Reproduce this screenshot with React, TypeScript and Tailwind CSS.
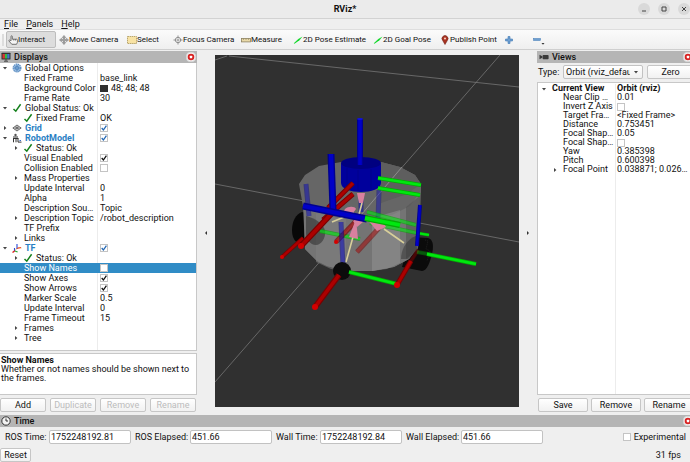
import { useState } from "react";
import type { ReactNode } from "react";
import clsx from "clsx";

type Row = {
  name: string;
  depth: number;
  arrow?: "open" | "closed";
  icon?: ReactNode;
  value?: string;
  checked?: boolean;
  display?: boolean;
  swatch?: boolean;
  bold?: boolean;
};

const TickIcon = () => (
  <svg viewBox="0 0 10 10" className="h-2.5 w-2.5 shrink-0" fill="none">
    <path d="M1.5 6l2.3 2.2L8.6 1.3" stroke="#14801c" strokeWidth="1.5" />
  </svg>
);

const GearIcon = () => (
  <svg viewBox="0 0 10 10" className="h-2.5 w-2.5 shrink-0" fill="none">
    <circle cx="5" cy="5" r="3.8" stroke="#4d83bd" strokeWidth="1.3" strokeDasharray="1.5 .5" />
    <circle cx="5" cy="5" r="3.2" fill="#8fb4db" />
    <circle cx="5" cy="5" r="1.8" stroke="#4d83bd" strokeWidth=".8" />
    <path d="M5 2v6M2 5h6" stroke="#4d83bd" strokeWidth=".6" />
  </svg>
);

const GridIcon = () => (
  <svg viewBox="0 0 10 10" className="h-2.5 w-2.5 shrink-0" fill="none" stroke="#666" strokeWidth=".9">
    <path d="M.8 5L5 2l4.2 3L5 8zM3 3.5l4.2 3M7 3.5l-4.2 3M1 5h8M5 2v6" />
  </svg>
);

const RobotIcon = () => (
  <svg viewBox="0 0 10 10" className="h-2.5 w-2.5 shrink-0" fill="none" stroke="#333">
    <circle cx="3.5" cy="2" r="1.2" fill="#555" stroke="none" />
    <path d="M1 4h5M2 5.5h4.5M1.5 5v4.3M4 5.5v3.8M6 5.5v3.6h3.5" />
    <path d="M7.5 7.5h1.5" stroke="#36c" />
  </svg>
);

const TfIcon = () => (
  <svg viewBox="0 0 10 10" className="h-2.5 w-2.5 shrink-0" fill="none">
    <path d="M1.5 8.5l2-1.6 2.5-2.4L9.5 5" stroke="#e8b64c" strokeWidth=".8" />
    <path d="M5 6V1M2.5 8V5" stroke="#2b48d8" strokeWidth="1.1" />
    <path d="M5 5.500l4-1" stroke="#ee4433" strokeWidth="1.2" />
    <path d="M.5 9.5l2.2-1.6" stroke="#dd2222" strokeWidth="1.3" />
    <path d="M3 8l2.6 1" stroke="#22aa33" strokeWidth="1.2" />
  </svg>
);

const displayRows: Row[] = [
  { name: "Global Options", depth: 0, arrow: "open", icon: <GearIcon /> },
  { name: "Fixed Frame", depth: 1, value: "base_link" },
  { name: "Background Color", depth: 1, value: "48; 48; 48", swatch: true },
  { name: "Frame Rate", depth: 1, value: "30" },
  { name: "Global Status: Ok", depth: 0, arrow: "open", icon: <TickIcon /> },
  { name: "Fixed Frame", depth: 1, icon: <TickIcon />, value: "OK" },
  { name: "Grid", depth: 0, arrow: "closed", icon: <GridIcon />, checked: true, display: true },
  { name: "RobotModel", depth: 0, arrow: "open", icon: <RobotIcon />, checked: true, display: true },
  { name: "Status: Ok", depth: 1, arrow: "closed", icon: <TickIcon /> },
  { name: "Visual Enabled", depth: 1, checked: true },
  { name: "Collision Enabled", depth: 1, checked: false },
  { name: "Mass Properties", depth: 1, arrow: "closed" },
  { name: "Update Interval", depth: 1, value: "0" },
  { name: "Alpha", depth: 1, value: "1" },
  { name: "Description Sou…", depth: 1, value: "Topic" },
  { name: "Description Topic", depth: 1, arrow: "closed", value: "/robot_description" },
  { name: "TF Prefix", depth: 1 },
  { name: "Links", depth: 1, arrow: "closed" },
  { name: "TF", depth: 0, arrow: "open", icon: <TfIcon />, checked: true, display: true },
  { name: "Status: Ok", depth: 1, arrow: "closed", icon: <TickIcon /> },
  { name: "Show Names", depth: 1, checked: false },
  { name: "Show Axes", depth: 1, checked: true },
  { name: "Show Arrows", depth: 1, checked: true },
  { name: "Marker Scale", depth: 1, value: "0.5" },
  { name: "Update Interval", depth: 1, value: "0" },
  { name: "Frame Timeout", depth: 1, value: "15" },
  { name: "Frames", depth: 1, arrow: "closed" },
  { name: "Tree", depth: 1, arrow: "closed" },
];

const viewRows: Row[] = [
  { name: "Current View", depth: 0, arrow: "open", value: "Orbit (rviz)", bold: true },
  { name: "Near Clip …", depth: 1, value: "0.01" },
  { name: "Invert Z Axis", depth: 1, checked: false },
  { name: "Target Fra…", depth: 1, value: "<Fixed Frame>" },
  { name: "Distance", depth: 1, value: "0.753451" },
  { name: "Focal Shap…", depth: 1, value: "0.05" },
  { name: "Focal Shap…", depth: 1, checked: false },
  { name: "Yaw", depth: 1, value: "0.385398" },
  { name: "Pitch", depth: 1, value: "0.600398" },
  { name: "Focal Point", depth: 1, arrow: "closed", value: "0.038871; 0.026…" },
];

function Arrow({ kind }: { kind?: "open" | "closed" }) {
  return (
    <svg viewBox="0 0 6 6" className="h-1.5 w-1.5 shrink-0" fill="#444">
      {kind === "open" && <path d="M1 2h4L3 4.4z" />}
      {kind === "closed" && <path d="M2 1l2.4 2L2 5z" />}
    </svg>
  );
}

function Check({ label, initial, blue }: { label: string; initial: boolean; blue?: boolean }) {
  const [on, setOn] = useState(initial);
  return (
    <span className="grid h-2 w-2 shrink-0 place-items-center">
      <input
        type="checkbox"
        aria-label={label}
        checked={on}
        onChange={() => setOn(!on)}
        className="col-start-1 row-start-1 h-2 w-2 appearance-none border border-[#c4c4c4] bg-white"
      />
      {on && (
        <svg viewBox="0 0 8 8" className="pointer-events-none col-start-1 row-start-1 h-2 w-2" fill="none">
          <path d="M1.7 4l1.7 2L6.4 1.6" stroke={blue ? "#2468b4" : "#111"} strokeWidth="1.3" />
        </svg>
      )}
    </span>
  );
}

function CloseButton({ label }: { label: string }) {
  return (
    <button aria-label={label} className="grid h-2.5 w-2.5 shrink-0 place-items-center rounded-sm border border-[#d8d8d8] bg-[#f6f6f6]">
      <svg viewBox="0 0 8 8" className="h-2 w-2">
        <circle cx="4" cy="4" r="3.3" fill="#d82222" />
        <rect x="2.8" y="2.8" width="2.4" height="2.4" rx=".5" fill="#fff" />
      </svg>
    </button>
  );
}

function PanelTitle({ icon, children, className }: { icon: ReactNode; children: string; className?: string }) {
  return (
    <div className={clsx("flex h-3 shrink-0 items-center bg-[#b5b5b5] pr-px", className)}>
      {icon}
      <h2 className="ml-[3px] flex-1 font-medium">{children}</h2>
      <CloseButton label={`Close ${children}`} />
    </div>
  );
}

function PushButton({ children, disabled, className }: { children: string; disabled?: boolean; className?: string }) {
  return (
    <button
      disabled={disabled}
      className={clsx(
        "h-[14px] rounded-xs border border-[#c6c6c6] bg-linear-to-b from-white to-[#f1f1f1] leading-3 disabled:text-[#bcbcbc]",
        className,
      )}
    >
      {children}
    </button>
  );
}

function DisplaysPanel() {
  return (
    <section className="flex w-[197px] shrink-0 flex-col">
      <PanelTitle
        icon={
          <svg viewBox="0 0 10 10" className="ml-px h-2.5 w-2.5">
            <rect x=".5" y=".8" width="9" height="6.7" rx=".5" fill="#333" />
            <path d="M1.5 2h2.4v4.5H1.5z" fill="#d33" />
            <path d="M3.9 2h2.3v4.5H3.9z" fill="#3b4" />
            <path d="M6.2 2h2.3v4.5H6.2z" fill="#47c" />
            <path d="M3 9.2h4M5 7v2" stroke="#444" />
          </svg>
        }
      >
        Displays
      </PanelTitle>
      <div role="treegrid" aria-label="Displays" className="flex flex-1 flex-col border-r border-b border-[#c8c8c8] bg-white">
        {displayRows.map((row, i) => {
          const selected = row.name === "Show Names";
          return (
            <div role="row" key={i} className={clsx("flex h-2.5 items-center", selected && "bg-[#308cc6] text-white")}>
              <div
                role="gridcell"
                className={clsx(
                  "flex h-full w-[98px] shrink-0 items-center whitespace-nowrap",
                  row.depth === 0 ? "pl-[2px]" : "pl-[13px]",
                  !selected && "border-r border-[#ececec]",
                )}
              >
                <Arrow kind={row.arrow} />
                {row.icon ? (
                  <span className="mr-[3px] ml-1 flex">{row.icon}</span>
                ) : (
                  <span className="w-[5px] shrink-0" />
                )}
                <span className={clsx(row.display && "font-bold text-[#2a7fc4]")}>{row.name}</span>
              </div>
              <div role="gridcell" className="flex items-center gap-[3px] pl-[2px] whitespace-nowrap">
                {row.checked !== undefined && <Check label={row.name} initial={row.checked} blue={row.display} />}
                {row.swatch && <span className="h-[7px] w-2 bg-[#303030]" />}
                {row.value}
              </div>
            </div>
          );
        })}
        <div className="w-[98px] flex-1 border-r border-[#ececec]" />
      </div>
      <div className="mt-[2px] h-[42px] border border-l-0 border-[#c8c8c8] bg-white pt-[2px] pl-px leading-[9px]">
        <p className="font-bold">Show Names</p>
        <p>Whether or not names should be shown next to the frames.</p>
      </div>
      <div className="flex gap-1 py-[3px] pr-px">
        <PushButton className="flex-1">Add</PushButton>
        <PushButton disabled className="flex-1">Duplicate</PushButton>
        <PushButton disabled className="flex-1">Remove</PushButton>
        <PushButton disabled className="flex-1">Rename</PushButton>
      </div>
    </section>
  );
}

function ViewsPanel() {
  return (
    <section className="flex w-[153px] shrink-0 flex-col">
      <PanelTitle
        className="-mr-1"
        icon={
          <svg viewBox="0 0 10 10" className="ml-[2px] h-2.5 w-2.5" fill="#3b3b3b">
            <path d="M.5 2.8l2.8 1.5v1.4L.5 7.2z" />
            <rect x="3.6" y="3" width="6" height="4.2" rx=".8" />
          </svg>
        }
      >
        Views
      </PanelTitle>
      <div className="flex items-center overflow-hidden pt-[2px] pb-[3px] pl-px">
        <label htmlFor="view-type" className="w-[25px] shrink-0">Type:</label>
        <div className="grid w-20 shrink-0 items-center">
          <select
            id="view-type"
            className="col-start-1 row-start-1 h-[14px] w-full appearance-none overflow-hidden rounded-xs border border-[#c2c2c2] bg-linear-to-b from-white to-[#f0f0f0] pr-3 pl-[2px] leading-3"
          >
            <option>Orbit (rviz_default_plugins)</option>
          </select>
          <span className="pointer-events-none col-start-1 row-start-1 mr-1 justify-self-end">
            <Arrow kind="open" />
          </span>
        </div>
        <PushButton className="-mr-1 ml-1 flex-1">Zero</PushButton>
      </div>
      <div role="treegrid" aria-label="Views" className="flex flex-1 flex-col overflow-hidden border border-r-0 border-[#c8c8c8] bg-white pt-px">
        {viewRows.map((row, i) => (
          <div role="row" key={i} className={clsx("flex h-[9px] items-center leading-[9px] whitespace-nowrap", row.bold && "font-bold")}>
            <div
              role="gridcell"
              className={clsx(
                "flex h-full w-[78px] shrink-0 items-center gap-[5px] border-r border-[#ececec]",
                row.depth === 0 ? "pl-[3px]" : "pl-[14px]",
              )}
            >
              <Arrow kind={row.arrow} />
              {row.name}
            </div>
            <div role="gridcell" className="flex pl-px">
              {row.checked !== undefined && <Check label={row.name} initial={row.checked} />}
              {row.value}
            </div>
          </div>
        ))}
        <div className="w-[78px] flex-1 border-r border-[#ececec]" />
      </div>
      <div className="flex gap-[3px] overflow-hidden py-[3px] pl-px">
        <PushButton className="w-[50px] shrink-0">Save</PushButton>
        <PushButton className="w-[50px] shrink-0">Remove</PushButton>
        <PushButton className="w-[50px] shrink-0">Rename</PushButton>
      </div>
    </section>
  );
}

type RodProps = { d: string; c: "red" | "green" | "blue"; w: number; o?: number };

const rodColors = {
  red: ["#780000", "#ac0000"],
  green: ["#00b000", "#00e810"],
  blue: ["#000090", "#0000c8"],
};

// an axis rod: dark rim stroke with a brighter core on top
function Rod({ d, c, w, o = 1 }: RodProps) {
  return (
    <g opacity={o} fill="none">
      <path d={d} stroke={rodColors[c][0]} strokeWidth={w} />
      <path d={d} stroke={rodColors[c][1]} strokeWidth={w * 0.6} />
    </g>
  );
}

function Scene() {
  return (
    <svg viewBox="215 55 304 352" preserveAspectRatio="xMidYMid slice" className="h-full w-full bg-[#303030]" role="img" aria-label="Robot model">
      <g stroke="#808080" strokeWidth=".7" fill="none">
        <path d="M215 60l12-4M229 56l290 31M500 55L215 382M215 184l304 58" />
      </g>

      {/* left wheel */}
      <path d="M302 212c-6 2-10 9-10 18s4 13 8 13l6-3v-27z" fill="#080808" />

      {/* right wheel */}
      <path d="M411 237l17 1c5 1 6 8 4 16s-5 17-10 17l-20-4z" fill="#0b0b0b" />
      <path d="M425 240l3 1-2 8 4 2-3 10" stroke="#1e1e1e" fill="none" strokeDasharray="1 1" />

      {/* body shell */}
      <path
        d="M299 184l6-9 14-9 22-4 40 0 19 5 15 8 6 9v8l-3 56-9 11-15 8-22 4-26 0-19-5-10-5-12-12-1-37z"
        fill="#666"
      />
      <path d="M303 204l14 8 20 6 25 1 30-4 18-9 10-14-2 55-9 12-15 8-22 4-26 0-19-5-10-5-12-12z" fill="#747474" />
      <path d="M316 213v49l15 7 15 2v-52z" fill="#808080" opacity=".55" />
      <path d="M372 218v53l15-2 13-6v-53z" fill="#999" opacity=".45" />
      <path d="M406 207v52l12-10 3-54z" fill="#555" opacity=".6" />
      <path d="M381 162l19 5 15 8 6 9-14 10-26 9z" fill="#5e5e5e" />
      <path d="M306 216c9 2 18 8 19 15s-4 14-9 14c-6 0-10-6-10-12z" fill="#333" opacity=".6" />
      <path d="M416 236c-9 3-15 13-15 23l7 0 9-8z" fill="#222" opacity=".4" />
      <path d="M402 167L337 243" stroke="#a0a0a0" strokeWidth=".7" />

      <Rod d="M306 184l3 32" c="blue" w={5} o={0.45} />
      <Rod d="M379 190l-1 30" c="blue" w={5} o={0.4} />
      <Rod d="M361 196v16" c="blue" w={5} o={0.5} />
      <Rod d="M320 231l40 8" c="green" w={4} o={0.65} />
      <Rod d="M367 212l49 13M370 223l47 10" c="green" w={4} o={0.6} />
      <Rod d="M417 233l12 2" c="green" w={3} />
      <Rod d="M357 220l-21 22" c="red" w={5} o={0.65} />
      <Rod d="M379 228l-22 24" c="red" w={5} o={0.5} />

      {/* frame arrows */}
      <g stroke="#d8cf9a" strokeWidth="1.6">
        <path d="M353 237l-7 25M384 229l20 14M332 222l22-9M362 203l-4 15" />
      </g>
      <g fill="#d9809f">
        <path d="M357 193h8l-2 10h-4z" />
        <path d="M356 219l-7 18 9 2z" />
        <path d="M345 209c3-3 10-3 11 0l-3 4-10 0z" />
        <path d="M367 219l14-1 5 9-9 4z" />
        <path d="M353 221l7-5 3 6-6 5z" />
      </g>

      {/* lidar */}
      <path d="M341 163v20c0 12 40 12 40 0v-20z" fill="#00009c" />
      <path d="M347 168v19M358 170v21M371 169v20" stroke="#00008c" />
      <ellipse cx="361" cy="163" rx="20" ry="6" fill="#000080" />
      <Rod d="M360 119v46" c="blue" w={6} />
      <ellipse cx="360" cy="119" rx="3" ry="1" fill="#1111e0" />

      <Rod d="M378 178l43 7M378 188l42 7" c="green" w={4} />
      <Rod d="M353 183l-25 25M353 194l-30 26" c="red" w={5} />
      <Rod d="M303 238l-21 19" c="red" w={4} />
      <Rod d="M333 212l-32 34" c="red" w={6} />
      <Rod d="M341 222l2 44" c="blue" w={5} o={0.5} />
      <Rod d="M331 154l2 56" c="blue" w={7} />
      <Rod d="M303 206l64 13" c="blue" w={7} />
      <Rod d="M365 218l35 7" c="green" w={6} />
      <Rod d="M420 205l-3 41" c="blue" w={4} />

      {/* caster and the axes in front */}
      <circle cx="342" cy="271" r="9" fill="#0c0c0c" />
      <Rod d="M349 272l48 12" c="green" w={4} />
      <Rod d="M339 275l-24 32" c="red" w={6} />
      <Rod d="M418 250l-7 11" c="red" w={4} o={0.4} />
      <Rod d="M411 261l-14 24" c="red" w={5} />
      <Rod d="M417 252l11 2" c="green" w={4} o={0.35} />
      <Rod d="M427 254l49 10" c="green" w={4} />
      <g fill="#d40000">
        <circle cx="315" cy="307" r="3" />
        <circle cx="301" cy="246" r="3" />
        <circle cx="282" cy="257" r="2" />
        <circle cx="336" cy="242" r="2" />
        <circle cx="397" cy="285" r="3" />
      </g>
    </svg>
  );
}

const MoveIcon = () => (
  <svg viewBox="0 0 10 10" className="h-2.5 w-2.5 shrink-0" fill="#aaa" stroke="#777" strokeWidth=".6">
    <path d="M5 .5l1.6 2H5.6v1.9h1.9v-1L9.5 5l-2 1.6v-1H5.6v1.9h1L5 9.5l-1.6-2h1V5.6H2.5v1L.5 5l2-1.6v1h1.9V2.5h-1z" />
  </svg>
);

const FocusIcon = () => (
  <svg viewBox="0 0 10 10" className="h-2.5 w-2.5 shrink-0" fill="none" stroke="#888" strokeWidth=".9">
    <circle cx="5" cy="5" r="2.7" />
    <path d="M5 .5v3M5 6.5v3M.5 5h3M6.5 5h3" />
    <circle cx="5" cy="5" r=".5" fill="#777" />
  </svg>
);

const PoseIcon = () => (
  <svg viewBox="0 0 10 10" className="h-2.5 w-2.5 shrink-0">
    <path d="M.8 8.3L5.3 4l4.2-2.5L6.5 5.2 1.5 8.8z" fill="#14d72c" />
  </svg>
);

const tools = [
  {
    name: "Interact",
    width: "w-[50px]",
    icon: (
      <svg viewBox="0 0 10 10" className="h-2.5 w-2.5 shrink-0" fill="#f4f4f4" stroke="#555" strokeWidth=".8">
        <path d="M3 5.5V1.5c0-1 1.3-1 1.3 0v2.7h4.2c.7 0 .9.5.9 1v2.3L8.5 9.3H3.8L.8 5.8c0-1 1-1.1 2.2.2zM5.8 4.2v1.3M7.5 4.2v1.3" />
      </svg>
    ),
  },
  { name: "Move Camera", width: "w-[66px]", icon: <MoveIcon /> },
  {
    name: "Select",
    width: "w-11",
    icon: (
      <svg viewBox="0 0 10 10" className="h-2.5 w-2.5 shrink-0">
        <rect x=".5" y="1.5" width="9" height="7" fill="#f8e3a4" stroke="#aa9456" strokeWidth=".8" strokeDasharray="1.5 .6" />
      </svg>
    ),
  },
  { name: "Focus Camera", width: "w-[66px]", icon: <FocusIcon /> },
  {
    name: "Measure",
    width: "w-[50px]",
    icon: (
      <svg viewBox="0 0 10 10" className="h-2.5 w-2.5 shrink-0">
        <rect x=".5" y="3.5" width="9" height="3.4" fill="#e9d9a8" stroke="#8c8060" strokeWidth=".8" />
        <path d="M2.5 3.5v1.5M5 3.5v1.5M7.5 3.5v1.5" stroke="#8c8060" strokeWidth=".6" />
      </svg>
    ),
  },
  { name: "2D Pose Estimate", width: "w-[78px]", icon: <PoseIcon /> },
  { name: "2D Goal Pose", width: "w-[65px]", icon: <PoseIcon /> },
  {
    name: "Publish Point",
    width: "w-16",
    icon: (
      <svg viewBox="0 0 10 10" className="h-2.5 w-2.5 shrink-0">
        <path d="M5 9.5L2.7 5.5a3 3 0 1 1 4.6 0z" fill="#a83322" stroke="#702015" strokeWidth=".6" />
        <circle cx="5" cy="3.5" r="1.1" fill="#f7c9bb" />
      </svg>
    ),
  },
];

const timeFields = [
  { label: "ROS Time:", id: "ros-time", value: "1752248192.81", labelWidth: "w-11" },
  { label: "ROS Elapsed:", id: "ros-elapsed", value: "451.66", labelWidth: "w-[55px]" },
  { label: "Wall Time:", id: "wall-time", value: "1752248192.84", labelWidth: "w-11" },
  { label: "Wall Elapsed:", id: "wall-elapsed", value: "451.66", labelWidth: "w-[55px]" },
];

export default function App() {
  return (
    <div className="flex min-h-screen flex-col overflow-hidden bg-[#efefef] font-[Roboto,sans-serif] text-[9px] leading-[10px] text-[#111]">
      {/* Title bar */}
      <header className="grid h-[19px] grid-cols-[1fr_auto_1fr] items-center border-b border-[#d2d2d2] bg-[#ebebeb]">
        <span />
        <h1 className="font-bold">RViz*</h1>
        <div className="flex justify-end gap-2">
          {["M4 8h4", "M4 4h4v4H4z", "M4 4l4 4M8 4L4 8"].map((d, i) => (
            <button key={d} aria-label={["Minimize", "Maximize", "Close"][i]} className="h-3 w-3 rounded-full bg-[#d9d9d9]">
              <svg viewBox="0 0 12 12" fill="none" stroke="#444">
                <path d={d} />
              </svg>
            </button>
          ))}
        </div>
      </header>

      <nav className="flex h-[11px] items-center gap-2 border-b border-[#dedede] pl-1">
        {["File", "Panels", "Help"].map((item) => (
          <button key={item} className="leading-[10px]">
            <span className="underline">{item[0]}</span>
            {item.slice(1)}
          </button>
        ))}
      </nav>

      {/* Toolbar */}
      <div className="flex h-5 items-center gap-[2px] border-b border-[#cfcfcf] bg-linear-to-b from-[#fbfbfb] to-[#efefef] pl-[2px] text-[8px]">
        <span className="h-3 w-[2px] border-x border-[#dddddd]" />
        {tools.map((tool, i) => (
          <button
            key={tool.name}
            className={clsx(
              "flex h-[17px] shrink-0 items-center rounded-xs border whitespace-nowrap",
              tool.width,
              i === 0 ? "border-[#bdbdbd] bg-[#dddddd] pl-px" : "border-transparent",
            )}
          >
            {tool.icon}
            {tool.name}
          </button>
        ))}
        <button aria-label="Add tool" className="grid w-2 place-items-center">
          <svg viewBox="0 0 8 8" className="h-2 w-2">
            <path d="M3 .5h2V3h2.5v2H5v2.5H3V5H.5V3H3z" fill="#6e9fd0" stroke="#3f78b5" strokeWidth=".6" />
          </svg>
        </button>
        <button aria-label="Remove tool" className="ml-[18px] flex items-center">
          <svg viewBox="0 0 14 10" className="h-2.5 w-[14px]">
            <rect x=".5" y="3.5" width="7" height="2" fill="#6e9fd0" stroke="#3f78b5" strokeWidth=".5" />
            <path d="M8.500 8h3L10 9.800z" fill="#333" />
          </svg>
        </button>
      </div>

      <main className="flex flex-1 pt-px">
        <DisplaysPanel />
        <button aria-label="Collapse left panel" className="grid w-[18px] shrink-0 place-items-center">
          <svg viewBox="0 0 6 6" className="h-1.5 w-1.5" fill="#333">
            <path d="M4 1L2 3l2 2z" />
          </svg>
        </button>
        <div className="grid min-w-0 flex-1 pt-1 pb-2">
          <Scene />
        </div>
        <button aria-label="Collapse right panel" className="grid w-[18px] shrink-0 place-items-center">
          <svg viewBox="0 0 6 6" className="h-1.5 w-1.5" fill="#333">
            <path d="M2 1l2 2-2 2z" />
          </svg>
        </button>
        <ViewsPanel />
      </main>

      {/* Time panel */}
      <footer>
        <PanelTitle
          className="-mr-1"
          icon={
            <svg viewBox="0 0 10 10" className="ml-px h-2.5 w-2.5" fill="#f2f2f2" stroke="#333">
              <circle cx="5" cy="5" r="4.2" />
              <path d="M5 2.5V5h2" fill="none" />
            </svg>
          }
        >
          Time
        </PanelTitle>
        <div className="flex items-center pt-[3px] pr-1 pl-[5px]">
          {timeFields.map((field) => (
            <div key={field.id} className="mr-1 flex items-center whitespace-nowrap">
              <label htmlFor={field.id} className={field.labelWidth}>{field.label}</label>
              <input
                id={field.id}
                defaultValue={field.value}
                className="h-[14px] w-[82px] rounded-xs border border-[#c2c2c2] bg-white px-px"
              />
            </div>
          ))}
          <label className="ml-auto flex items-center gap-[3px]">
            <Check label="Experimental" initial={false} />
            Experimental
          </label>
        </div>
        <div className="flex items-center justify-between pt-1 pr-[9px]">
          <PushButton className="w-[31px]">Reset</PushButton>
          <span>31 fps</span>
        </div>
      </footer>
    </div>
  );
}
